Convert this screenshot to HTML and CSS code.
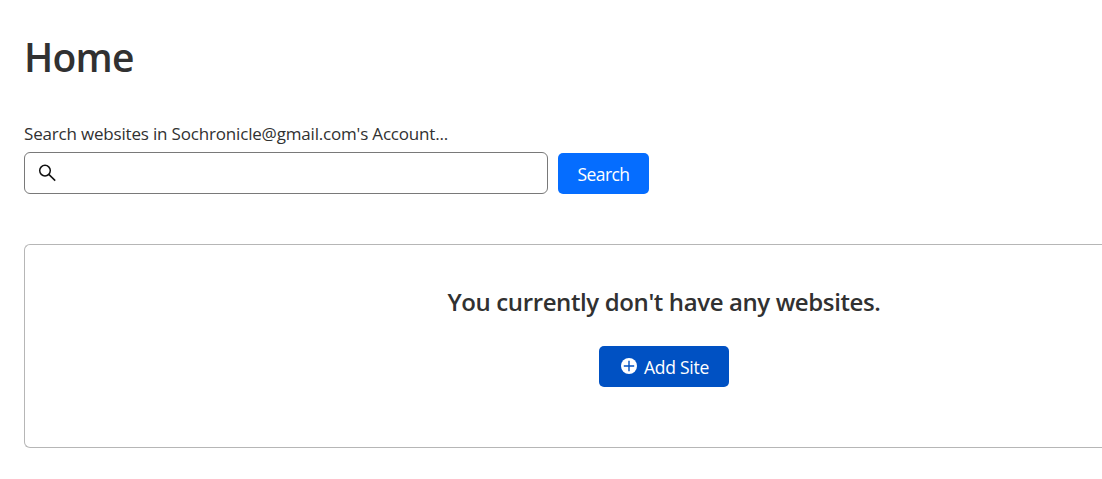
FILE: index.html
```html
<!DOCTYPE html>
<html lang="en">
<head>
<meta charset="utf-8">
<title>Home</title>
<link rel="stylesheet" href="styles.css">
</head>
<body>
<main class="page">
  <h1 class="title">Home</h1>
  <form class="search">
    <label class="search-label" for="q">Search websites in Sochronicle@gmail.com's Account...</label>
    <div class="search-row">
      <div class="field">
        <svg class="field-icon" viewBox="0 0 18 18" aria-hidden="true"><circle cx="7" cy="6.6" r="5.3"/><path d="M10.8 10.4l6.4 6.2"/></svg>
        <input class="input" id="q" type="text">
      </div>
      <button class="button search-button" type="button">Search</button>
    </div>
  </form>
  <section class="empty">
    <h2 class="empty-title">You currently don't have any websites.</h2>
    <button class="button add-button" type="button">
      <svg class="add-icon" viewBox="0 0 16 16" aria-hidden="true"><circle cx="8" cy="8" r="8"/><path d="M8 2.8v10.4M2.8 8h10.4"/></svg>
      <span>Add Site</span>
    </button>
  </section>
</main>
</body>
</html>
```
FILE: styles.css
```css
* { box-sizing: border-box; }
body { margin: 0; background: #fff; color: #313131; font-family: "Open Sans", "Noto Sans", sans-serif; }
.page { padding: 32px 0 0 24px; }
.title { margin: 0; font-size: 39px; line-height: 50px; font-weight: 600; letter-spacing: -0.8px; }
.search { margin-top: 40px; }
.search-label { display: block; font-size: 17px; line-height: 24px; letter-spacing: -0.18px; white-space: nowrap; }
.search-row { display: flex; gap: 10px; margin-top: 6px; }
.field { display: flex; align-items: center; width: 524px; height: 42px; border: 1px solid #797979; border-radius: 6px; padding-left: 13px; }
.field-icon { flex: none; width: 18px; height: 18px; fill: none; stroke: #111; stroke-width: 1.5; }
.input { flex: 1; min-width: 0; border: 0; outline: 0; background: none; font: inherit; }
.button { display: flex; align-items: center; justify-content: center; border: 0; border-radius: 5px; height: 41px; padding: 0; color: #fff; font-family: inherit; font-size: 17.5px; letter-spacing: -0.25px; }
.search-button { width: 91px; margin-top: 1px; background: #056dff; letter-spacing: -0.6px; }
.empty { display: flex; flex-direction: column; align-items: center; height: 204px; margin-top: 50px; padding: 41px 0 0 201px; border: 1px solid #b6b6b6; border-right: 0; border-radius: 6px 0 0 6px; }
.empty-title { margin: 0; font-size: 24px; line-height: 32px; font-weight: 600; letter-spacing: -0.38px; white-space: nowrap; }
.add-button { width: 130px; margin-top: 28px; padding-left: 2px; gap: 7px; background: #0051c3; }
.add-icon { width: 16px; height: 16px; margin-top: -2px; fill: #fff; stroke: #0051c3; stroke-width: 1.4; }
.add-icon circle { stroke: none; }
```
